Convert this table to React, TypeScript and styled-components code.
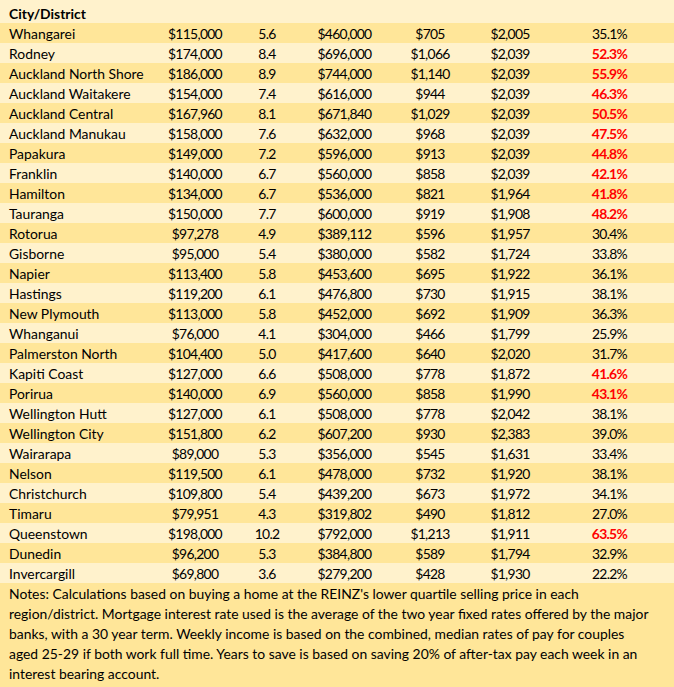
import React from "react";
import styled, { createGlobalStyle } from "styled-components";

const Global = createGlobalStyle`
  html, body { margin: 0; padding: 0; background: #FFF2CC; }
  body { font-family: Lato, "Open Sans", sans-serif; font-size: 13.9px; color: #000; }
`;

const COLS = "160px 70px 74px 81px 90px 70px 129px";

const Sheet = styled.div`
  width: 674px;
  height: 687px;
  display: flex;
  flex-direction: column;
  background: #FFF2CC;
  overflow: hidden;
`;

const HeaderRow = styled.div`
  display: grid;
  grid-template-columns: ${COLS};
  height: 23px;
  align-items: center;
  background: #FFF2CC;
  font-weight: 700;
  padding-top: 4px;
  box-sizing: border-box;
`;

const Row = styled.div<{ $dark: boolean }>`
  display: grid;
  grid-template-columns: ${COLS};
  height: 20px;
  align-items: center;
  background: ${(p) => (p.$dark ? "#FFE699" : "#FFF2CC")};
`;

const NameCell = styled.div`
  padding-left: 9px;
  white-space: nowrap;
`;

const NumCell = styled.div<{ $red?: boolean }>`
  text-align: center;
  white-space: nowrap;
  letter-spacing: -0.7px;
  color: ${(p) => (p.$red ? "#FF0000" : "#000")};
  font-weight: ${(p) => (p.$red ? 700 : 400)};
`;

const Notes = styled.div`
  flex: 1;
  background: #FFE699;
  padding: 1px 0 0 9px;
  line-height: 20px;
`;

const NoteLine = styled.div`
  white-space: nowrap;
`;

type R = [string, string, string, string, string, string, string, boolean];

const rows: R[] = [
  ["Whangarei", "$115,000", "5.6", "$460,000", "$705", "$2,005", "35.1%", false],
  ["Rodney", "$174,000", "8.4", "$696,000", "$1,066", "$2,039", "52.3%", true],
  ["Auckland North Shore", "$186,000", "8.9", "$744,000", "$1,140", "$2,039", "55.9%", true],
  ["Auckland Waitakere", "$154,000", "7.4", "$616,000", "$944", "$2,039", "46.3%", true],
  ["Auckland Central", "$167,960", "8.1", "$671,840", "$1,029", "$2,039", "50.5%", true],
  ["Auckland Manukau", "$158,000", "7.6", "$632,000", "$968", "$2,039", "47.5%", true],
  ["Papakura", "$149,000", "7.2", "$596,000", "$913", "$2,039", "44.8%", true],
  ["Franklin", "$140,000", "6.7", "$560,000", "$858", "$2,039", "42.1%", true],
  ["Hamilton", "$134,000", "6.7", "$536,000", "$821", "$1,964", "41.8%", true],
  ["Tauranga", "$150,000", "7.7", "$600,000", "$919", "$1,908", "48.2%", true],
  ["Rotorua", "$97,278", "4.9", "$389,112", "$596", "$1,957", "30.4%", false],
  ["Gisborne", "$95,000", "5.4", "$380,000", "$582", "$1,724", "33.8%", false],
  ["Napier", "$113,400", "5.8", "$453,600", "$695", "$1,922", "36.1%", false],
  ["Hastings", "$119,200", "6.1", "$476,800", "$730", "$1,915", "38.1%", false],
  ["New Plymouth", "$113,000", "5.8", "$452,000", "$692", "$1,909", "36.3%", false],
  ["Whanganui", "$76,000", "4.1", "$304,000", "$466", "$1,799", "25.9%", false],
  ["Palmerston North", "$104,400", "5.0", "$417,600", "$640", "$2,020", "31.7%", false],
  ["Kapiti Coast", "$127,000", "6.6", "$508,000", "$778", "$1,872", "41.6%", true],
  ["Porirua", "$140,000", "6.9", "$560,000", "$858", "$1,990", "43.1%", true],
  ["Wellington Hutt", "$127,000", "6.1", "$508,000", "$778", "$2,042", "38.1%", false],
  ["Wellington City", "$151,800", "6.2", "$607,200", "$930", "$2,383", "39.0%", false],
  ["Wairarapa", "$89,000", "5.3", "$356,000", "$545", "$1,631", "33.4%", false],
  ["Nelson", "$119,500", "6.1", "$478,000", "$732", "$1,920", "38.1%", false],
  ["Christchurch", "$109,800", "5.4", "$439,200", "$673", "$1,972", "34.1%", false],
  ["Timaru", "$79,951", "4.3", "$319,802", "$490", "$1,812", "27.0%", false],
  ["Queenstown", "$198,000", "10.2", "$792,000", "$1,213", "$1,911", "63.5%", true],
  ["Dunedin", "$96,200", "5.3", "$384,800", "$589", "$1,794", "32.9%", false],
  ["Invercargill", "$69,800", "3.6", "$279,200", "$428", "$1,930", "22.2%", false],
];

const notes = [
  "Notes: Calculations based on buying a home at the REINZ's lower quartile selling price in each",
  "region/district. Mortgage interest rate used is the average of the two year fixed rates offered by the major",
  "banks, with a 30 year term. Weekly income is based on the combined, median rates of pay for couples",
  "aged 25-29 if both work full time. Years to save is based on saving 20% of after-tax pay each week in an",
  "interest bearing account.",
];

export default function App() {
  return (
    <>
      <Global />
      <Sheet>
        <HeaderRow>
          <NameCell>City/District</NameCell>
        </HeaderRow>
        {rows.map((r, i) => (
          <Row key={r[0]} $dark={i % 2 === 0}>
            <NameCell>{r[0]}</NameCell>
            <NumCell>{r[1]}</NumCell>
            <NumCell>{r[2]}</NumCell>
            <NumCell>{r[3]}</NumCell>
            <NumCell>{r[4]}</NumCell>
            <NumCell>{r[5]}</NumCell>
            <NumCell $red={r[7]}>{r[6]}</NumCell>
          </Row>
        ))}
        <Notes>
          {notes.map((n) => (
            <NoteLine key={n}>{n}</NoteLine>
          ))}
        </Notes>
      </Sheet>
    </>
  );
}
